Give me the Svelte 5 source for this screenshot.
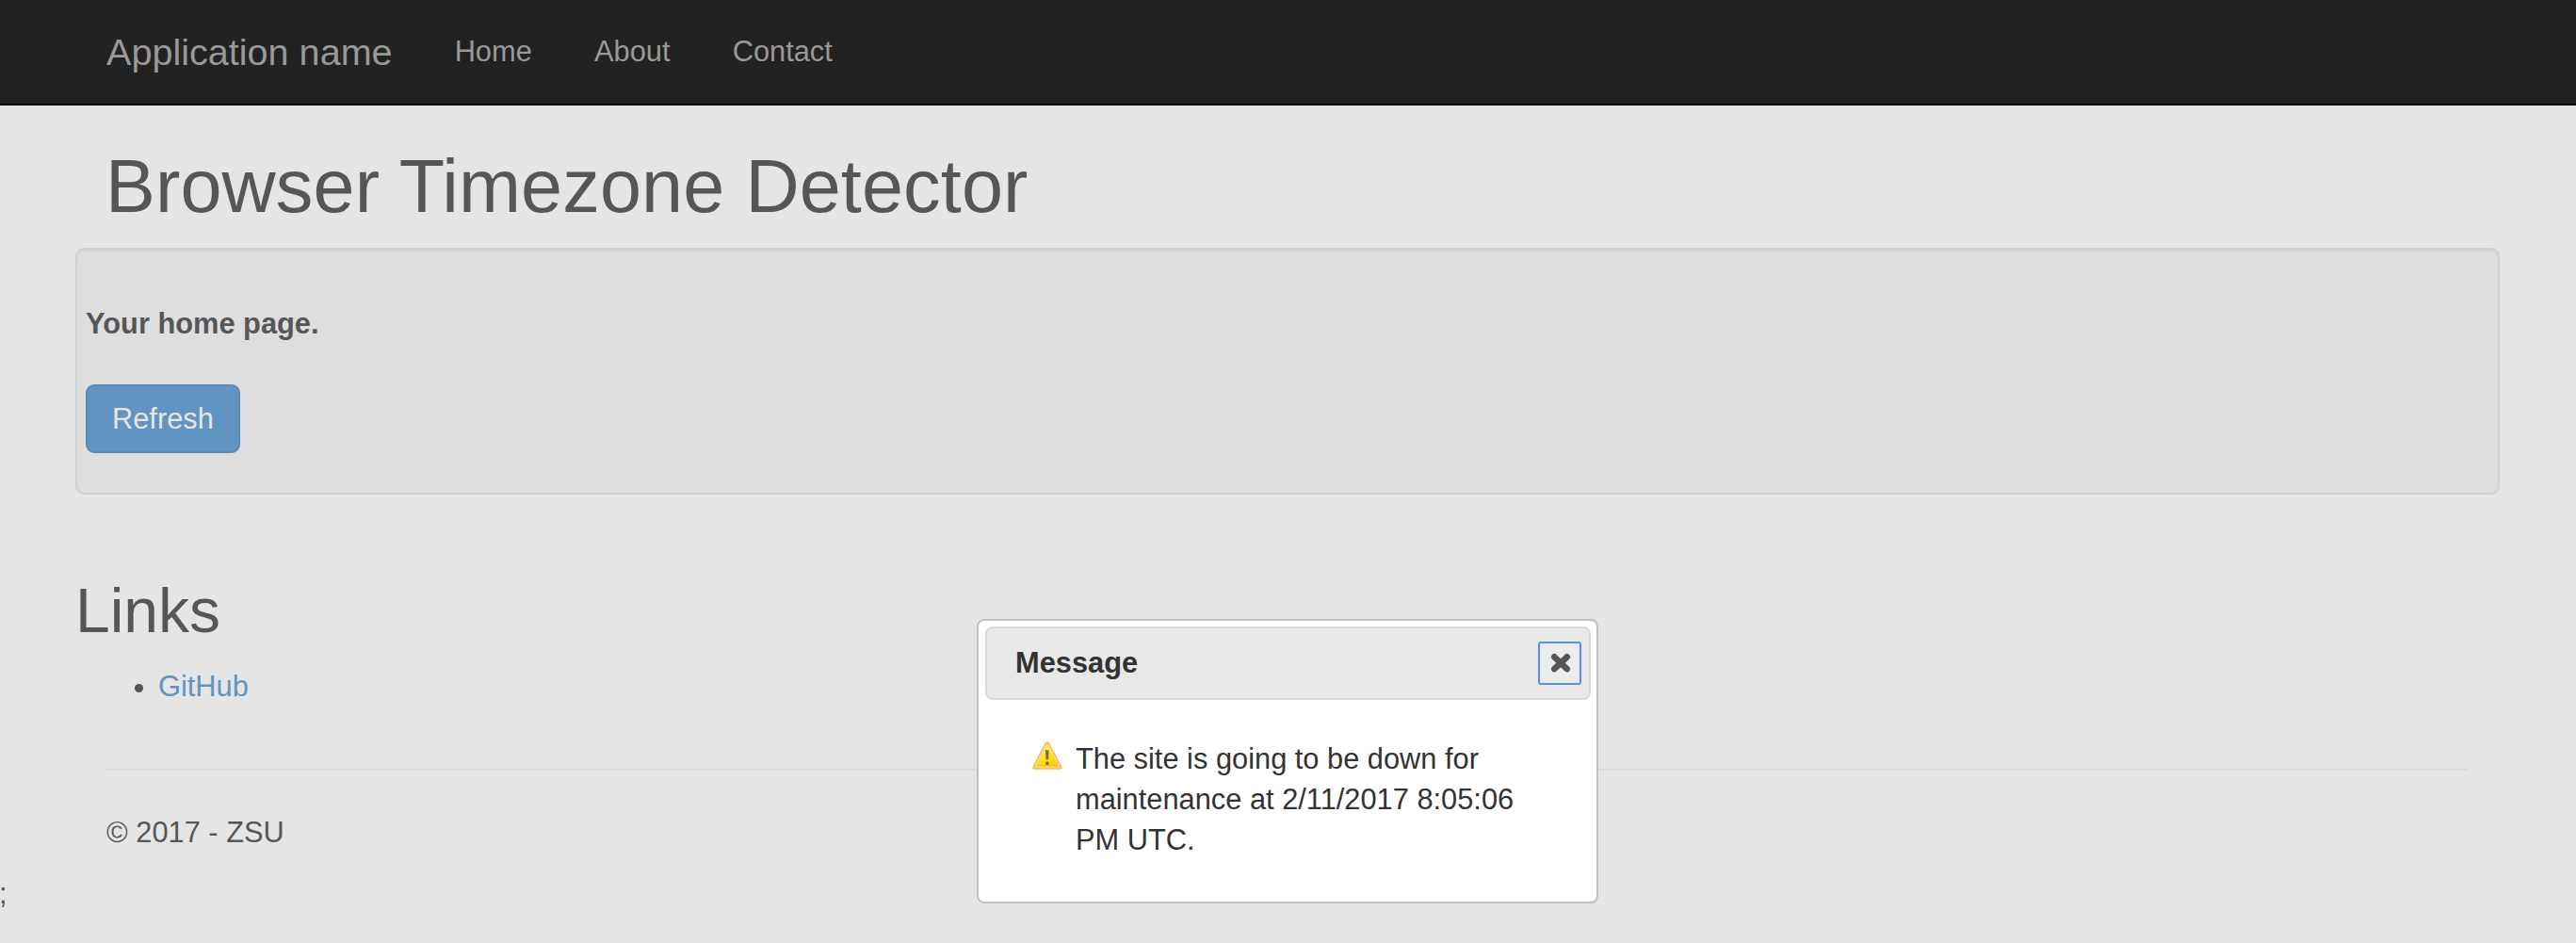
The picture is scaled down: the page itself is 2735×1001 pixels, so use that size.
<script>
  const navLinks = ['Home', 'About', 'Contact'];
</script>

<div class="page">
  <header class="navbar">
    <a class="brand" href="#top">Application name</a>
    <nav>
      {#each navLinks as label}
        <a href="#{label.toLowerCase()}">{label}</a>
      {/each}
    </nav>
  </header>

  <main>
    <h1>Browser Timezone Detector</h1>
    <section class="well">
      <p>Your home page.</p>
      <button class="refresh" type="button">Refresh</button>
    </section>
    <section class="links">
      <h2>Links</h2>
      <ul>
        <li><a href="#github">GitHub</a></li>
      </ul>
    </section>
    <footer>© 2017 - ZSU</footer>
  </main>
  <div class="stray">;</div>

  <div class="overlay"></div>

  <div class="dialog" role="dialog" aria-label="Message">
    <div class="titlebar">
      <span>Message</span>
      <button class="close" type="button" aria-label="Close">
        <svg width="22" height="22" viewBox="0 0 22 22">
          <path d="M4.3 4.3 17.7 17.1M17.7 4.3 4.3 17.1" stroke="#555" stroke-width="6.6" stroke-linecap="round" />
        </svg>
      </button>
    </div>
    <div class="content">
      <svg class="warning" width="34" height="32" viewBox="0 0 34 32">
        <defs>
          <linearGradient id="amber" x1="0" y1="0" x2="0.3" y2="1">
            <stop offset="0" stop-color="#fff3b0" />
            <stop offset="0.5" stop-color="#ffe640" />
            <stop offset="1" stop-color="#fccb12" />
          </linearGradient>
        </defs>
        <path d="M14.7 2.6Q16.8-.4 18.9 2.6L32.3 27.4Q33.5 30.7 30.1 30.8H3.7Q.3 30.7 1.5 27.4Z" fill="#fcb968" />
        <path d="M15.8 4.7Q16.8 3.1 17.8 4.7L29.6 26.8Q30.2 28.3 28.8 28.4H5Q3.5 28.3 4.1 26.8Z" fill="url(#amber)" stroke="#ffe48a" stroke-width="1" />
        <path d="M14.9 10.3H18.7L18.1 20.2H15.5Z" fill="#85702f" />
        <rect x="15" y="22.4" width="3.6" height="3.6" rx="1" fill="#85702f" />
      </svg>
      <p>The site is going to be down for maintenance at 2/11/2017 8:05:06 PM UTC.</p>
    </div>
  </div>
</div>

<style>
  :global(body) {
    margin: 0;
    background: #fff;
  }
  .page {
    position: relative;
    height: 1001px;
    overflow: hidden;
    font: 30.8px/44px 'Liberation Sans', Arial, sans-serif;
    color: #333;
  }
  a {
    color: #428bca;
    text-decoration: none;
  }
  button {
    font: inherit;
    box-sizing: border-box;
  }
  .navbar {
    position: relative;
    z-index: 2;
    box-sizing: border-box;
    height: 112px;
    padding: 33px 113px 0;
    display: flex;
    gap: 66px;
    background: #222;
    border-bottom: 2px solid #080808;
  }
  .navbar a {
    color: #999;
  }
  .brand {
    font-size: 39.6px;
  }
  nav {
    display: flex;
    gap: 66.2px;
  }
  main {
    padding: 42px 114px 0 113px;
  }
  h1,
  h2 {
    font-weight: 400;
    margin: 0;
  }
  h1 {
    font-size: 79.2px;
    line-height: 87px;
    letter-spacing: 0.1px;
    margin: 0 0 22px -1px;
  }
  .well {
    box-sizing: border-box;
    height: 262px;
    margin: 0 -33px;
    padding: 57px 9px 0;
    background: #f5f5f5;
    border: 2px solid #e3e3e3;
    border-radius: 9px;
    box-shadow: inset 0 2px 2px rgba(0, 0, 0, 0.05);
  }
  .well p {
    margin: 0 0 42px;
    font-weight: 700;
  }
  .refresh {
    display: block;
    height: 73px;
    padding: 0 26px;
    color: #fff;
    background: #428bca;
    border: 2px solid #357ebd;
    border-radius: 9px;
  }
  .links {
    margin: 87px -33px 0;
  }
  h2 {
    font-size: 66px;
    line-height: 73px;
    margin-bottom: 22px;
  }
  ul {
    margin: 0;
    padding-left: 88px;
  }
  footer {
    margin-top: 65px;
    padding-top: 44px;
    border-top: 2px solid #eee;
  }
  .stray {
    margin-top: 21px;
    margin-left: -1px;
  }
  .overlay {
    position: absolute;
    inset: 0;
    z-index: 1;
    background: #aaa;
    opacity: 0.3;
  }
  .dialog {
    position: absolute;
    z-index: 3;
    left: 1037px;
    top: 657px;
    width: 660px;
    height: 302px;
    box-sizing: border-box;
    padding: 6px;
    background: #fff;
    border: 2px solid #c0c0c0;
    border-radius: 8px;
  }
  .titlebar {
    box-sizing: border-box;
    height: 78px;
    padding: 0 8px 0 30px;
    margin: 0 0 0 1px;
    display: flex;
    align-items: center;
    justify-content: space-between;
    font-weight: 700;
    background: #e8e8e8;
    border: 2px solid #dadada;
    border-radius: 8px;
  }
  .close {
    width: 46px;
    height: 46px;
    padding: 0 0 0 2px;
    display: flex;
    align-items: center;
    justify-content: center;
    background: #ececec;
    border: 2px solid #5b8fdf;
    border-radius: 3px;
  }
  .close svg {
    fill: none;
  }
  .content {
    display: flex;
    align-items: flex-start;
    gap: 13px;
    padding: 41px 40px 0 50px;
  }
  .warning {
    flex: none;
    margin-top: 2px;
  }
  .content p {
    margin: 0;
    line-height: 43px;
  }
</style>
